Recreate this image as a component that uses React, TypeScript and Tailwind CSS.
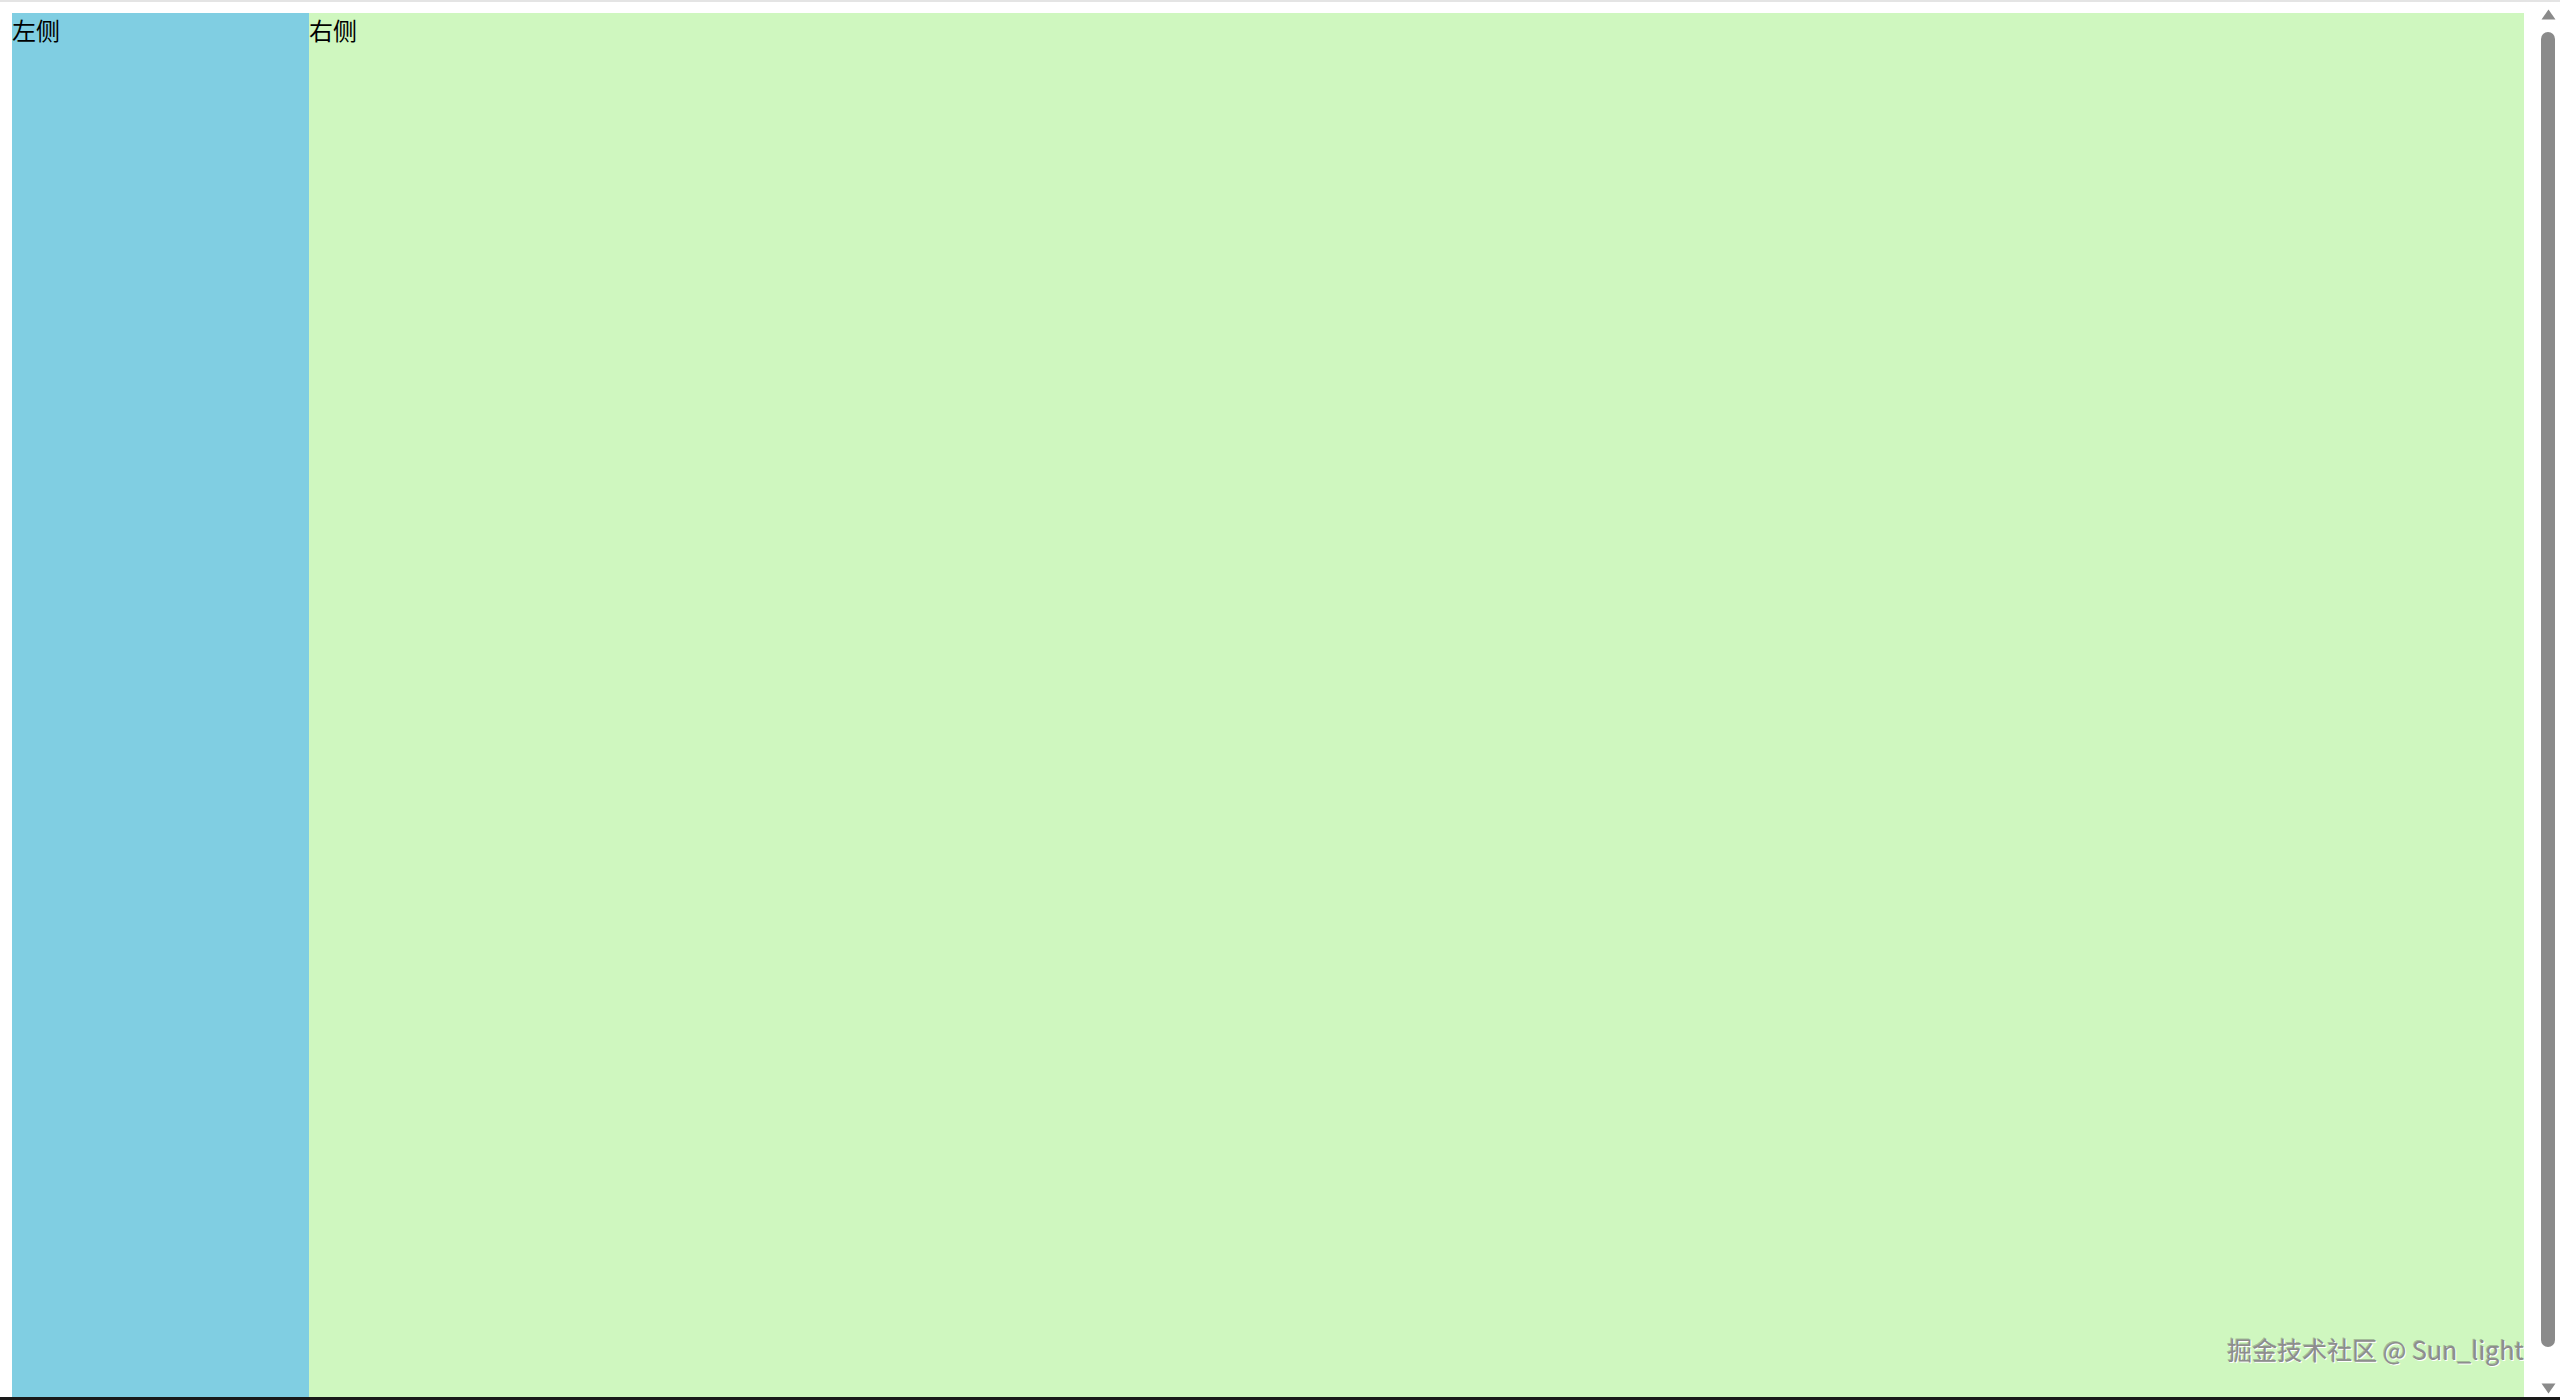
import React from "react";

export default function App() {
  return (
    <div className="relative flex h-[1400px] w-full flex-col overflow-hidden bg-white" style={{ fontFamily: '"Noto Sans CJK SC", "Noto Sans", sans-serif' }}>
      <div className="h-[2px] w-full bg-[#e4e4e4]" />
      <div className="flex min-h-0 flex-1">
        <div className="flex min-w-0 flex-1 pl-[12px] pr-[12px] pt-[11px]">
          <div className="w-[297px] bg-[#80cee2] text-[24px] leading-[33px] text-black">左侧</div>
          <div className="relative flex-1 bg-[#cff7bf] text-[24px] leading-[33px] text-black">
            右侧
            <div
              className="absolute bottom-[31px] right-0 whitespace-nowrap text-[25px] leading-[34px] text-[#8d8d8d]"
              style={{ textShadow: "1px 1px 0 #ffffff, -1px -1px 0 rgba(80,80,80,0.35)" }}
            >
              掘金技术社区 @ Sun_light
            </div>
          </div>
        </div>
        <div className="flex w-[24px] flex-col items-center bg-white pt-[7px] pb-[3px]">
          <svg width="15" height="11" viewBox="0 0 15 11" className="shrink-0">
            <path d="M7.5 0.5 L14.5 10.5 L0.5 10.5 Z" fill="#8a8a8a" />
          </svg>
          <div className="mt-[12px] w-[14px] flex-1 rounded-full bg-[#8a8a8a]" />
          <svg width="15" height="11" viewBox="0 0 15 11" className="mt-[36px] shrink-0">
            <path d="M0.5 0.5 L14.5 0.5 L7.5 10.5 Z" fill="#8a8a8a" />
          </svg>
        </div>
      </div>
      <div className="h-[3px] w-full bg-[#1a1a1a]" />
    </div>
  );
}
